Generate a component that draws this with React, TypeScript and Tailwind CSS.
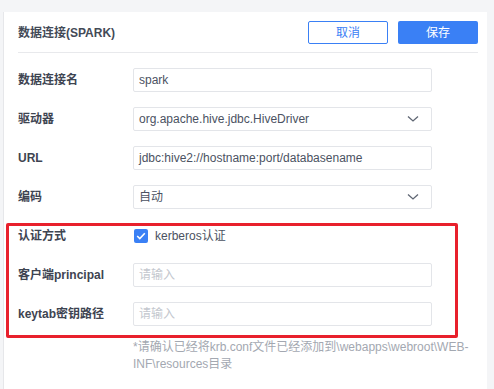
import { ReactNode } from 'react'

const font = {
  fontFamily: '"Helvetica Neue", "Liberation Sans", "Noto Sans CJK SC", sans-serif',
}

function Chevron() {
  return (
    <svg width="12" height="8" viewBox="0 0 12 8" className="shrink-0">
      <polyline points="1,1.5 6,6 11,1.5" fill="none" stroke="#5f6673" strokeWidth="1.3" />
    </svg>
  )
}

function Field({ value, placeholder, select }: { value?: string; placeholder?: string; select?: boolean }) {
  return (
    <div className="w-[299px] h-[24px] border border-[#e3e5e9] rounded-[2px] flex items-center pl-[5px] pr-[12px] bg-white">
      <span className={`flex-1 text-[12px] leading-none ${value ? 'text-[#4b5262]' : 'text-[#c3c7ce]'}`}>
        {value ?? placeholder}
      </span>
      {select && <Chevron />}
    </div>
  )
}

function Row({ label, children }: { label: string; children: ReactNode }) {
  return (
    <div className="flex items-center h-[24px]">
      <div className="w-[115px] text-[12px] font-semibold text-[#3e4451]">{label}</div>
      {children}
    </div>
  )
}

export default function App() {
  return (
    <div style={font} className="relative w-[494px] h-[389px] bg-[#f4f5f7] overflow-hidden flex pt-[12px] pl-[3px] pr-[7px]">
      <div className="flex-1 bg-white border-l border-[#e6e7ea] pl-[14px] pr-[9px]">
        {/* Header */}
        <div className="pt-[9px] pb-[8px] border-b border-[#e8e9ec] flex items-center justify-between">
          <h1 className="text-[12px] font-bold text-[#434a57]">数据连接(SPARK)</h1>
          <div className="flex gap-[10px]">
            <button className="w-[80px] h-[23px] border border-[#3a80f5] rounded-[2px] text-[12px] text-[#3a80f5] bg-white">
              取消
            </button>
            <button className="w-[80px] h-[23px] bg-[#3a80f5] rounded-[2px] text-[12px] text-white">
              保存
            </button>
          </div>
        </div>

        {/* Form */}
        <div className="mt-[15px] flex flex-col gap-[15px]">
          <Row label="数据连接名">
            <Field value="spark" />
          </Row>
          <Row label="驱动器">
            <Field value="org.apache.hive.jdbc.HiveDriver" select />
          </Row>
          <Row label="URL">
            <Field value="jdbc:hive2://hostname:port/databasename" />
          </Row>
          <Row label="编码">
            <Field value="自动" select />
          </Row>
          <Row label="认证方式">
            <div className="flex items-center gap-[7px] pl-[1px]">
              <div className="w-[14px] h-[14px] rounded-[2px] bg-[#3a80f5] flex items-center justify-center">
                <svg width="10" height="8" viewBox="0 0 10 8">
                  <polyline points="1.2,4 3.8,6.5 8.8,1.3" fill="none" stroke="white" strokeWidth="1.6" />
                </svg>
              </div>
              <span className="text-[12px] text-[#4b5262]">kerberos认证</span>
            </div>
          </Row>
          <Row label="客户端principal">
            <Field placeholder="请输入" />
          </Row>
          <Row label="keytab密钥路径">
            <Field placeholder="请输入" />
          </Row>
        </div>

        <p className="mt-[13px] ml-[115px] text-[12px] leading-[17px] text-[#a3a8b1]">
          *请确认已经将krb.conf文件已经添加到\webapps\webroot\WEB-INF\resources目录
        </p>
      </div>

      {/* red annotation box */}
      <div className="absolute left-[6px] top-[223px] w-[452px] h-[115px] border-[3px] border-[#e8202c] rounded-[2px]" />
    </div>
  )
}
